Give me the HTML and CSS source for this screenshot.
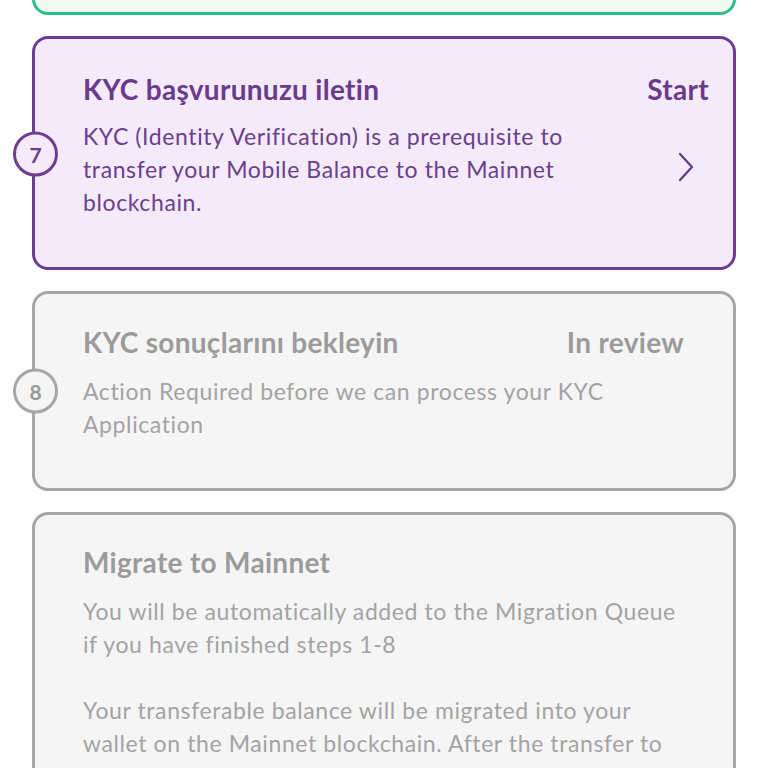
FILE: index.html
```html
<!DOCTYPE html>
<html>
<head>
<meta charset="utf-8">
<link rel="stylesheet" href="styles.css">
</head>
<body>
<div class="steps">
  <div class="card card-done"></div>

  <div class="card card-active">
    <div class="badge">7</div>
    <div class="head">
      <div class="title">KYC başvurunuzu iletin</div>
      <div class="status">Start</div>
    </div>
    <div class="body-row">
      <div class="desc">KYC (Identity Verification) is a prerequisite to transfer your Mobile Balance to the Mainnet blockchain.</div>
      <svg class="chev" width="16" height="30" viewBox="0 0 16 30"><path d="M2 2 L14 15 L2 28" fill="none" stroke="#5b3a7d" stroke-width="2.2" stroke-linecap="round" stroke-linejoin="round"/></svg>
    </div>
  </div>

  <div class="card card-pending card-review">
    <div class="badge">8</div>
    <div class="head">
      <div class="title">KYC sonuçlarını bekleyin</div>
      <div class="status">In review</div>
    </div>
    <div class="desc">Action Required before we can process your KYC Application</div>
  </div>

  <div class="card card-pending card-last">
    <div class="title">Migrate to Mainnet</div>
    <div class="desc">You will be automatically added to the Migration Queue if you have finished steps 1-8</div>
    <div class="desc gap">Your transferable balance will be migrated into your wallet on the Mainnet blockchain. After the transfer to</div>
  </div>
</div>
</body>
</html>
```

FILE: styles.css
```css
html, body {
  margin: 0;
  padding: 0;
  background: #ffffff;
  overflow: hidden;
  height: 768px;
}
body {
  font-family: "Lato", "Noto Sans", sans-serif;
}
.steps {
  display: flex;
  flex-direction: column;
  gap: 21px;
  padding: 0 32px;
}
.card {
  position: relative;
  border: 3px solid #a6a6a6;
  border-radius: 16px;
  background: #f5f5f5;
  box-sizing: border-box;
}
.card-done {
  height: 200px;
  margin-top: -185px;
  border-color: #2bbf8b;
  background: #f3faf1;
}
.card-active {
  border-color: #6e3d92;
  background: #f4eafa;
  padding: 32px 24px 48px 48px;
  color: #6b3f8c;
}
.card-pending {
  padding: 30px 49px 47px 48px;
  color: #a3a3a3;
}
.card-last {
  padding-top: 29px;
  min-height: 400px;
}
.badge {
  position: absolute;
  left: -22px;
  top: 50%;
  transform: translateY(-50%);
  width: 45px;
  height: 45px;
  box-sizing: border-box;
  border: 3px solid #a6a6a6;
  border-radius: 50%;
  background: #f5f5f5;
  display: flex;
  align-items: center;
  justify-content: center;
  font-size: 21px;
  font-weight: 700;
  color: #9a9a9a;
}
.card-active .badge {
  border-color: #6e3d92;
  background: #f4eafa;
  color: #6b3f8c;
  top: calc(50% + 1px);
}
.head {
  display: flex;
  justify-content: space-between;
  align-items: baseline;
}
.title, .status {
  font-size: 28px;
  font-weight: 700;
  line-height: 36px;
  letter-spacing: 0.3px;
}
.card-active .title, .card-active .status { color: #6a3a8b; }
.card-pending .title, .card-pending .status { color: #9b9b9b; }
.desc {
  font-size: 23px;
  line-height: 33px;
  letter-spacing: 0.6px;
  margin-top: 15px;
}
.body-row {
  display: flex;
  align-items: center;
  justify-content: space-between;
  margin-top: 13px;
}
.body-row .desc {
  max-width: 520px;
  margin-top: 0;
}
.chev {
  margin-right: 15px;
  margin-top: -6px;
  flex-shrink: 0;
}
.card-last .desc.gap {
  margin-top: 33px;
}
```
